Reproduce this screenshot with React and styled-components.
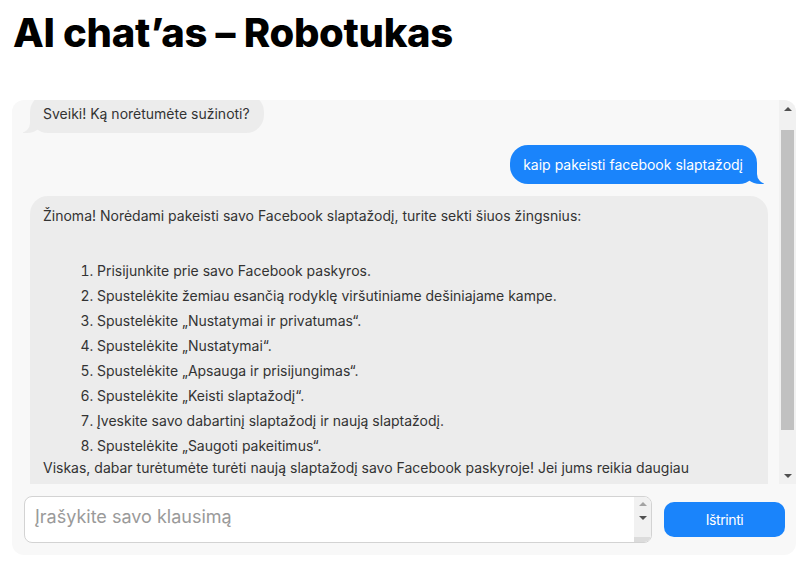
import { useLayoutEffect, useRef } from 'react';
import styled, { createGlobalStyle } from 'styled-components';

const GlobalStyle = createGlobalStyle`
    body {
        margin: 0;
        background: #ffffff;
        font-family: Inter, "Noto Sans", sans-serif;
    }
`

const Page = styled.div`
    padding: 0 12px;
`

const Title = styled.h1`
    margin: 10px 0 44px 1px;
    font-size: 40px;
    font-weight: 800;
    line-height: 46px;
    color: #000;
    letter-spacing: -0.3px;
`

const ChatBox = styled.div`
    background: #f8f8f8;
    border-radius: 12px;
    width: 784px;
    display: flex;
    flex-direction: column;
    overflow: hidden;
`

const ScrollArea = styled.div`
    display: flex;
    height: 384px;
`

const Messages = styled.div`
    flex: 1;
    overflow-y: scroll;
    scrollbar-width: none;
    padding: 0 11px 0 18px;
    display: flex;
    flex-direction: column;
    gap: 12px;
`

// hand-drawn classic scrollbar
const Bar = styled.div`
    width: 17px;
    display: flex;
    flex-direction: column;
    background: #f1f1f1;
    flex-shrink: 0;
`

const BarButton = styled.div`
    height: ${props => props.$h}px;
    display: flex;
    align-items: center;
    justify-content: center;
    flex-shrink: 0;
`

const Arrow = styled.span`
    width: 0;
    height: 0;
    border-left: 4px solid transparent;
    border-right: 4px solid transparent;
    ${props => props.$down
        ? `border-top: 4px solid ${props.$dim ? '#a3a3a3' : '#505050'};`
        : `border-bottom: 4px solid ${props.$dim ? '#a3a3a3' : '#505050'};`}
`

const Track = styled.div`
    flex: 1;
    padding: 13px 2px 0;
`

const Thumb = styled.div`
    height: 300px;
    background: #c1c1c1;
`

const Bubble = styled.div`
    position: relative;
    max-width: ${props => props.$wide ? 'none' : '80%'};
    align-self: ${props => props.$mine ? 'flex-end' : 'flex-start'};
    margin-right: ${props => props.$mine ? '11px' : '0'};
    padding: 9px 14px 9px 13px;
    border-radius: 18px;
    font-size: 14px;
    line-height: 21px;
    background: ${props => props.$mine ? '#1a84fb' : '#ececec'};
    color: ${props => props.$mine ? '#ffffff' : '#333333'};
    flex-shrink: 0;

    &::before {
        content: "";
        display: ${props => props.$tail ? 'block' : 'none'};
        position: absolute;
        bottom: 0;
        width: 20px;
        height: 18px;
        background: ${props => props.$mine ? '#1a84fb' : '#ececec'};
        ${props => props.$mine
            ? 'right: -7px; border-bottom-left-radius: 16px 14px;'
            : 'left: -7px; border-bottom-right-radius: 16px 14px;'}
    }

    &::after {
        content: "";
        display: ${props => props.$tail ? 'block' : 'none'};
        position: absolute;
        bottom: 0;
        width: 26px;
        height: 20px;
        background: #f8f8f8;
        ${props => props.$mine
            ? 'right: -26px; border-bottom-left-radius: 10px;'
            : 'left: -26px; border-bottom-right-radius: 10px;'}
    }
`

const Spacer = styled.div`
    height: 3px;
    flex-shrink: 0;
`

const Steps = styled.ol`
    margin: 34px 0 0 0;
    padding-left: 54px;
`

const Step = styled.li`
    line-height: 22px;
    & + & {
        margin-top: 3px;
    }
`

const Closing = styled.div`
    margin-top: -3px;
    line-height: 28px;
`

const InputRow = styled.div`
    display: flex;
    align-items: center;
    gap: 12px;
    padding: 12px 11px 12px 12px;
`

const InputBox = styled.div`
    flex: 1;
    height: 47px;
    box-sizing: border-box;
    display: flex;
    border: 1px solid #d3d3d3;
    border-radius: 8px;
    background: #fff;
    overflow: hidden;
`

const Question = styled.textarea`
    flex: 1;
    border: none;
    padding: 9px 10px;
    font-family: Inter, "Noto Sans", sans-serif;
    font-size: 18px;
    color: #333;
    background: transparent;
    resize: none;
    outline: none;
    overflow: hidden;

    &::placeholder {
        color: #9a9a9a;
    }
`

const Resizer = styled.div`
    height: 16px;
    background: #dcdcdc;
    display: flex;
    align-items: flex-end;
    justify-content: flex-end;
    flex-shrink: 0;
`

const DeleteButton = styled.button`
    width: 121px;
    height: 35px;
    border: none;
    border-radius: 10px;
    background: #1a84fb;
    color: #fff;
    font-family: Inter, "Noto Sans", sans-serif;
    font-size: 14px;
    letter-spacing: -0.4px;
    cursor: pointer;
`

const steps = [
    'Prisijunkite prie savo Facebook paskyros.',
    'Spustelėkite žemiau esančią rodyklę viršutiniame dešiniajame kampe.',
    'Spustelėkite „Nustatymai ir privatumas“.',
    'Spustelėkite „Nustatymai“.',
    'Spustelėkite „Apsauga ir prisijungimas“.',
    'Spustelėkite „Keisti slaptažodį“.',
    'Įveskite savo dabartinį slaptažodį ir naują slaptažodį.',
    'Spustelėkite „Saugoti pakeitimus“.',
]

const App = () => {
    const listRef = useRef(null)

    useLayoutEffect(() => {
        if (listRef.current) listRef.current.scrollTop = 21
    }, [])

    return (
        <Page>
            <GlobalStyle />
            <Title>AI chat’as – Robotukas</Title>
            <ChatBox>
                <ScrollArea>
                    <Messages ref={listRef}>
                        <Spacer />
                        <Bubble $tail>Sveiki! Ką norėtumėte sužinoti?</Bubble>
                        <Bubble $mine $tail>kaip pakeisti facebook slaptažodį</Bubble>
                        <Bubble $wide>
                            <div>Žinoma! Norėdami pakeisti savo Facebook slaptažodį, turite sekti šiuos žingsnius:</div>
                            <Steps>
                                {steps.map(s => <Step key={s}>{s}</Step>)}
                            </Steps>
                            <Closing>Viskas, dabar turėtumėte turėti naują slaptažodį savo Facebook paskyroje! Jei jums reikia daugiau pagalbos, nedvejodami klauskite.</Closing>
                        </Bubble>
                        <Spacer />
                    </Messages>
                    <Bar>
                        <BarButton $h={17}><Arrow /></BarButton>
                        <Track><Thumb /></Track>
                        <BarButton $h={17}><Arrow $down /></BarButton>
                    </Bar>
                </ScrollArea>
                <InputRow>
                    <InputBox>
                        <Question placeholder="Įrašykite savo klausimą" />
                        <Bar>
                            <BarButton $h={14}><Arrow $dim /></BarButton>
                            <BarButton $h={13}><Arrow $down /></BarButton>
                            <Track />
                            <Resizer>
                                <svg width="12" height="12" viewBox="0 0 12 12">
                                    <path d="M11 2 L2 11 M11 7 L7 11" stroke="#6b6b6b" strokeWidth="1" />
                                </svg>
                            </Resizer>
                        </Bar>
                    </InputBox>
                    <DeleteButton>Ištrinti</DeleteButton>
                </InputRow>
            </ChatBox>
        </Page>
    );
}

export default App;
